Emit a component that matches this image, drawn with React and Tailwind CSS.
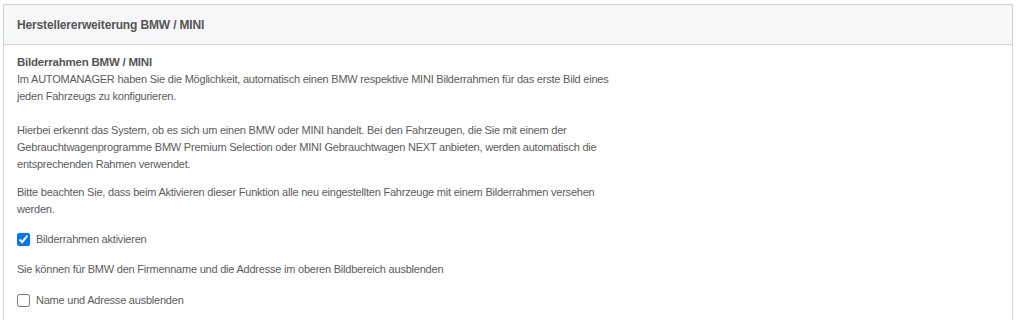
const App = () => {
  return (
    <div className="bg-white w-[1019px] h-[320px] overflow-hidden pt-1 pl-[3px] font-['Liberation_Sans',Arial,sans-serif] text-[#555]">
      <div className="w-[1010px] border border-[#d4d4d4] border-b-0">
        <div className="h-[40px] bg-[#f6f7f9] border-b border-[#d4d4d4] flex items-center px-[13px] font-bold text-[12px] tracking-[-0.15px]">Herstellererweiterung BMW / MINI</div>
        <div className="px-[13px] pt-[9px] pb-4 leading-[17px] w-[634px] text-[11px] tracking-[-0.22px] text-[#5c5c5c]">
          <p><strong className="text-[11.5px] text-[#555]">Bilderrahmen BMW / MINI</strong><br />Im AUTOMANAGER haben Sie die Möglichkeit, automatisch einen BMW respektive MINI Bilderrahmen für das erste Bild eines jeden Fahrzeugs zu konfigurieren.</p>
          <p className="mt-[17px]">Hierbei erkennt das System, ob es sich um einen BMW oder MINI handelt. Bei den Fahrzeugen, die Sie mit einem der Gebrauchtwagenprogramme BMW Premium Selection oder MINI Gebrauchtwagen NEXT anbieten, werden automatisch die entsprechenden Rahmen verwendet.</p>
          <p className="mt-[11px]">Bitte beachten Sie, dass beim Aktivieren dieser Funktion alle neu eingestellten Fahrzeuge mit einem Bilderrahmen versehen werden.</p>
          <label className="flex items-center mt-[11px] h-5">
            <input type="checkbox" defaultChecked className="m-0 mr-[6px] w-[13px] h-[13px]" />
            Bilderrahmen aktivieren
          </label>
          <p className="mt-[12px]">Sie können für BMW den Firmenname und die Addresse im oberen Bildbereich ausblenden</p>
          <label className="flex items-center mt-[12px] h-5">
            <input type="checkbox" className="m-0 mr-[6px] w-[13px] h-[13px]" />
            Name und Adresse ausblenden
          </label>
        </div>
      </div>
    </div>
  );
};

export default App;
